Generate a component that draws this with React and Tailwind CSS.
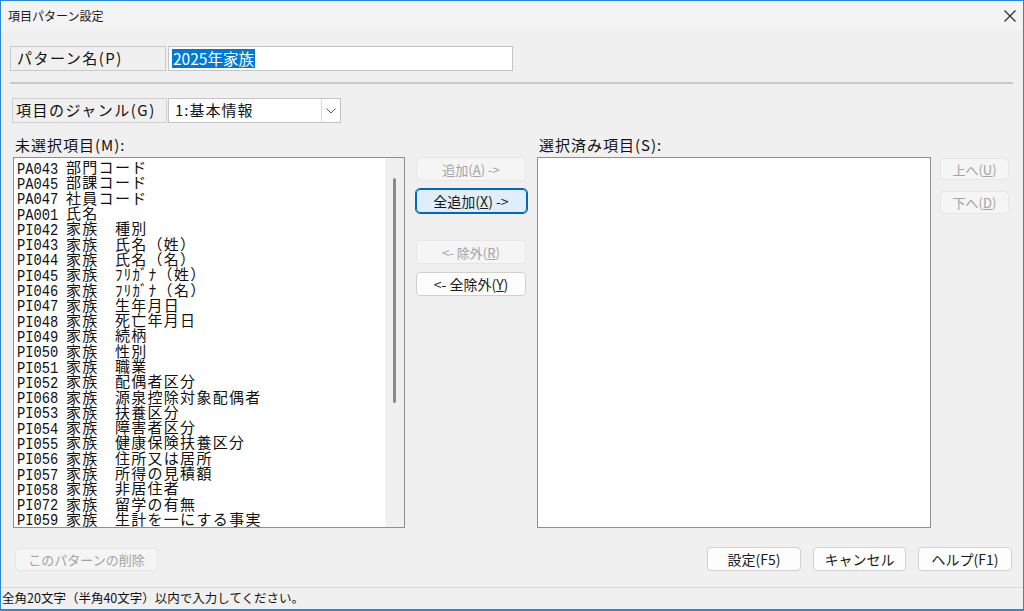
import React from "react";

const ui = { fontFamily: '"Noto Sans CJK JP", "Noto Sans", sans-serif' };
const gothic = { fontFamily: '"Noto Sans CJK JP", sans-serif' };
const mono = { fontFamily: '"Liberation Mono", monospace' };

const items = [
  ["PA043", "部門コード"],
  ["PA045", "部課コード"],
  ["PA047", "社員コード"],
  ["PA001", "氏名"],
  ["PI042", "家族　種別"],
  ["PI043", "家族　氏名（姓）"],
  ["PI044", "家族　氏名（名）"],
  ["PI045", "家族　ﾌﾘｶﾞﾅ（姓）"],
  ["PI046", "家族　ﾌﾘｶﾞﾅ（名）"],
  ["PI047", "家族　生年月日"],
  ["PI048", "家族　死亡年月日"],
  ["PI049", "家族　続柄"],
  ["PI050", "家族　性別"],
  ["PI051", "家族　職業"],
  ["PI052", "家族　配偶者区分"],
  ["PI068", "家族　源泉控除対象配偶者"],
  ["PI053", "家族　扶養区分"],
  ["PI054", "家族　障害者区分"],
  ["PI055", "家族　健康保険扶養区分"],
  ["PI056", "家族　住所又は居所"],
  ["PI057", "家族　所得の見積額"],
  ["PI058", "家族　非居住者"],
  ["PI072", "家族　留学の有無"],
  ["PI059", "家族　生計を一にする事実"],
];

const Btn = ({ children, disabled, focused, className = "" }) => (
  <div
    className={
      "flex items-center justify-center rounded-[4px] border text-[13px] leading-none whitespace-nowrap " +
      (disabled
        ? "border-[#e6e6e6] bg-[#f5f5f5] text-[#a3a3a3] "
        : focused
        ? "border-[#0067c0] bg-[#e0eef9] text-[#1a1a1a] outline outline-1 outline-[#0067c0] "
        : "border-[#d0d0d0] bg-[#fdfdfd] text-[#1a1a1a] ") +
      className
    }
    style={ui}
  >
    {children}
  </div>
);

const App = () => {
  return (
    <div className="w-[1024px] h-[611px] overflow-hidden bg-[#f0f0f0] border border-[#2b88d8] border-b-2 flex flex-col" style={ui}>
      {/* title bar */}
      <div className="h-[29px] bg-[#f3f3f3] flex items-center justify-between pl-[7px] pr-[6px] shrink-0">
        <span className="text-[12px] text-[#1a1a1a]">項目パターン設定</span>
        <svg width="14" height="14" viewBox="0 0 14 14" className="mt-[1px]">
          <path d="M1.5 1.5 L12.5 12.5 M12.5 1.5 L1.5 12.5" stroke="#333" strokeWidth="1.3" />
        </svg>
      </div>

      <div className="flex-1 flex flex-col px-[9px]">
        {/* pattern name */}
        <div className="mt-[16px] flex h-[25px]">
          <div className="w-[156px] border border-[#c8c8c8] bg-[#f0f0f0] flex items-center pl-[6px] text-[15px] tracking-[1.5px] text-[#111]" style={gothic}>
            パターン名(P)
          </div>
          <div className="ml-[2px] w-[345px] border border-[#c4c4c4] bg-white flex items-center pl-[3px]">
            <span className="bg-[#0078d7] text-white text-[15.5px] leading-[19px] px-[1px]" style={gothic}>2025年家族</span>
          </div>
        </div>

        {/* separator */}
        <div className="mt-[11px] h-[2px] bg-[#c9c9c9] mr-[1px]" />

        {/* genre */}
        <div className="mt-[14px] flex h-[25px] ml-[2px]">
          <div className="w-[155px] border border-[#d0d0d0] bg-[#f0f0f0] flex items-center pl-[3px] text-[15px] tracking-[1.5px] text-[#111]" style={gothic}>
            項目のジャンル(G)
          </div>
          <div className="ml-[1px] w-[173px] border border-[#c4c4c4] bg-white flex items-center">
            <span className="flex-1 pl-[6px] text-[15px] tracking-[1px] text-[#111]" style={gothic}>1:基本情報</span>
            <div className="w-[19px] h-full border-l border-[#dadada] flex items-center justify-center">
              <svg width="10" height="6" viewBox="0 0 10 6">
                <path d="M0.5 0.5 L5 5 L9.5 0.5" fill="none" stroke="#555" strokeWidth="1" />
              </svg>
            </div>
          </div>
        </div>

        {/* lists */}
        <div className="mt-[12px] flex">
          {/* left */}
          <div className="w-[392px] flex flex-col ml-[3px]">
            <div className="text-[15px] tracking-[1px] text-[#111] h-[22px] leading-[20px] pl-[2px]" style={gothic}>未選択項目(M):</div>
            <div className="h-[371px] border border-[#8f8f8f] bg-white flex">
              <div className="flex-1 pl-[3px] pt-[1px] overflow-hidden">
                {items.map(([code, name], i) => (
                  <div key={i} className="h-[15.3px] flex items-center whitespace-nowrap text-[#111]">
                    <span className="w-[49px] shrink-0 overflow-visible">
                      <span className="inline-block text-[16px] leading-[15px] scale-x-[0.86] origin-left" style={mono}>{code}</span>
                    </span>
                    <span className="text-[15px] leading-[15px] tracking-[1.3px]" style={gothic}>{name}</span>
                  </div>
                ))}
              </div>
              <div className="w-[19px] bg-[#f0f0f0] flex justify-center pt-[20px]">
                <div className="w-[3px] h-[225px] rounded-full bg-[#8a8a8a]" />
              </div>
            </div>
          </div>

          {/* middle buttons */}
          <div className="w-[132px] flex flex-col items-center pt-[22px]">
            <Btn disabled className="w-[110px] h-[24px]">追加(<u>A</u>) -&gt;</Btn>
            <Btn focused className="mt-[8px] w-[111px] h-[24px] text-[14px]">全追加(<u>X</u>) -&gt;</Btn>
            <Btn disabled className="mt-[27px] w-[110px] h-[24px]">&lt;- 除外(<u>R</u>)</Btn>
            <Btn className="mt-[8px] w-[110px] h-[24px] text-[14px]">&lt;- 全除外(<u>Y</u>)</Btn>
          </div>

          {/* right */}
          <div className="w-[394px] flex flex-col">
            <div className="text-[15px] tracking-[1px] text-[#111] h-[22px] leading-[20px] pl-[2px]" style={gothic}>選択済み項目(S):</div>
            <div className="h-[371px] border border-[#8f8f8f] bg-white" />
          </div>

          <div className="flex flex-col pl-[9px] pt-[23px]">
            <Btn disabled className="w-[69px] h-[22px]">上へ(<u>U</u>)</Btn>
            <Btn disabled className="mt-[11px] w-[69px] h-[23px]">下へ(<u>D</u>)</Btn>
          </div>
        </div>

        {/* bottom buttons */}
        <div className="mt-[19px] flex items-center">
          <Btn disabled className="ml-[5px] w-[143px] h-[23px]">このパターンの削除</Btn>
          <div className="flex-1" />
          <Btn className="w-[94px] h-[24px] text-[14px]">設定(F5)</Btn>
          <Btn className="ml-[12px] w-[93px] h-[24px] text-[14px]">キャンセル</Btn>
          <Btn className="ml-[12px] w-[94px] h-[24px] text-[14px] mr-[2px]">ヘルプ(F1)</Btn>
        </div>
      </div>

      {/* status bar */}
      <div className="h-[22px] border-t border-[#d9d9d9] flex items-center pl-[1px] shrink-0">
        <span className="text-[12.5px] text-[#111]">全角20文字（半角40文字）以内で入力してください。</span>
      </div>
    </div>
  );
};

export default App;
